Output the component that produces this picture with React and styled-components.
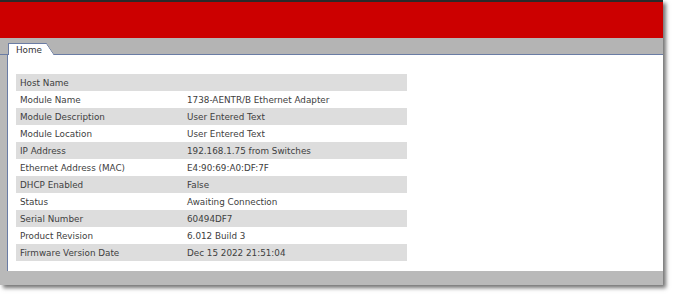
import React from 'react'
import styled, { createGlobalStyle } from 'styled-components'

const GlobalStyle = createGlobalStyle`
  body {
    margin: 0;
    min-height: 295px;
    background: #ffffff;
    font-family: "DejaVu Sans", Verdana, sans-serif;
  }
`

const Page = styled.div`
  padding-bottom: 10px;
`

const Frame = styled.div`
  width: 663px;
  border-top: 2px solid #2a2a2a;
  box-shadow: 3px 3px 4px rgba(0, 0, 0, 0.55);
`

const Header = styled.div`
  height: 36px;
  background: #cc0000;
`

const TabBar = styled.div`
  height: 16px;
  background: #b4b4b4;
  border-bottom: 1px solid #6a7ca4;
  padding-left: 8px;
  display: flex;
  align-items: flex-end;
`

const Tab = styled.div`
  position: relative;
  height: 11px;
  margin-bottom: -1px;
  padding: 0 4px 0 7px;
  width: 26px;
  background: #ffffff;
  border-top: 1px solid #6a7ca4;
  border-left: 1px solid #6a7ca4;
  font-size: 8.8px;
  line-height: 13px;
  color: #333333;

  &::after {
    content: '';
    position: absolute;
    top: -1px;
    right: -8px;
    width: 8px;
    height: 12px;
    background: linear-gradient(
      to top right,
      #ffffff calc(50% - 0.6px),
      #6a7ca4 50%,
      transparent calc(50% + 0.6px)
    );
  }
`

const Body = styled.div`
  background: #b9b9b9;
  padding: 0 0 14px 7px;
`

const Panel = styled.div`
  background: #ffffff;
  border-left: 1px solid #6a7ca4;
  padding: 19px 0 10px 8px;
`

const Table = styled.div`
  width: 391px;
  display: flex;
  flex-direction: column;
`

const Row = styled.div`
  display: grid;
  grid-template-columns: 171px 1fr;
  height: 17px;
  align-items: center;
  background: ${({ $shaded }) => ($shaded ? '#dddddd' : '#ffffff')};
  font-size: 8.8px;
  color: #404040;
`

const Label = styled.span`
  padding-left: 4px;
`

const Value = styled.span``

const rows = [
  ['Host Name', ''],
  ['Module Name', '1738-AENTR/B Ethernet Adapter'],
  ['Module Description', 'User Entered Text'],
  ['Module Location', 'User Entered Text'],
  ['IP Address', '192.168.1.75 from Switches'],
  ['Ethernet Address (MAC)', 'E4:90:69:A0:DF:7F'],
  ['DHCP Enabled', 'False'],
  ['Status', 'Awaiting Connection'],
  ['Serial Number', '60494DF7'],
  ['Product Revision', '6.012 Build 3'],
  ['Firmware Version Date', 'Dec 15 2022 21:51:04'],
]

export default function App() {
  return (
    <Page>
      <GlobalStyle />
      <Frame>
        <Header />
        <TabBar>
          <Tab>Home</Tab>
        </TabBar>
        <Body>
          <Panel>
            <Table>
              {rows.map(([label, value], i) => (
                <Row key={label} $shaded={i % 2 === 0}>
                  <Label>{label}</Label>
                  <Value>{value}</Value>
                </Row>
              ))}
            </Table>
          </Panel>
        </Body>
      </Frame>
    </Page>
  )
}
